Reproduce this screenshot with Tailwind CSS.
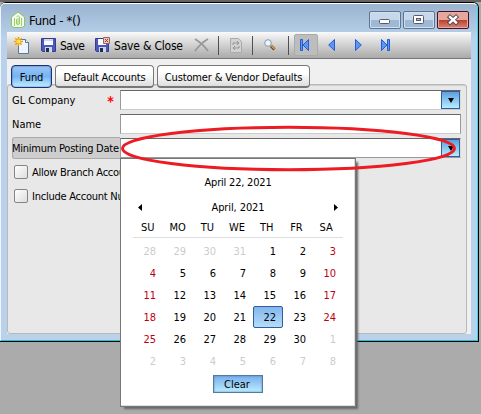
<!DOCTYPE html>
<html lang="en">
<head>
<meta charset="utf-8">
<title>Fund</title>
<script src="https://cdn.jsdelivr.net/npm/@tailwindcss/browser@4"></script>
</head>
<body class="relative h-[414px] w-[481px] overflow-hidden bg-[#ababab] font-['DejaVu_Sans_Condensed','DejaVu_Sans',sans-serif] text-[11px] leading-[14px] text-black [font-stretch:condensed]">
<div class="h-[2px] bg-[#656565]"></div>
<main class="flex h-[340px] w-[479px] flex-col rounded-t-[6px] border-t border-r border-b border-black bg-[#b9d1ea]">
 <div class="flex h-full flex-col rounded-t-[5px] border-t border-r border-b border-l border-t-white border-r-[#3bd5ec] border-b-[#18c9dc] border-l-[#eef5fb] bg-linear-to-b from-[#9ab4d1] from-0% via-[#b9d1ea] via-10% to-[#b9d1ea] pr-[6px] pl-[6px]">
  <header class="flex h-[28px] shrink-0 items-start">
   <svg class="mt-[7px] ml-[4px] shrink-0" width="14" height="18" viewBox="0 0 14 18"><path d="M.5 15V6L7 1l6.500 5v9L11 16.500H3z" fill="#f4faef" stroke="#8cc751"/><path d="M3.500 7v8M10.500 7v8M5.500 8v5q1.500 2 3 0V6Q7 3.500 5.500 6M7 7v6" fill="none" stroke="#9dcc70"/></svg>
   <h1 class="mt-[8px] ml-[4px] w-[56px] text-[13px] leading-[18px] tracking-[-0.35px] whitespace-nowrap">Fund - *()</h1>
   <div class="mt-[7px] mr-[2px] ml-auto flex gap-[2px]">
    <div class="h-[18px] w-[32px] rounded-[2px] border border-[#5d7590] bg-linear-to-b from-[#c7d8ea] from-48% to-[#9fb8d3] to-52% shadow-[inset_0_0_0_1px_#cfe0f1]"><svg width="30" height="16"><rect x="9.500" y="7.500" width="10" height="4" rx="1" fill="#fff" stroke="#555b68"/></svg></div>
    <div class="h-[18px] w-[32px] rounded-[2px] border border-[#5d7590] bg-linear-to-b from-[#c7d8ea] from-48% to-[#9fb8d3] to-52% shadow-[inset_0_0_0_1px_#cfe0f1]"><svg width="30" height="16"><rect x="9.500" y="3.500" width="10" height="8" rx="1" fill="#fff" stroke="#555b68"/><rect x="12.500" y="6.500" width="4" height="2" fill="#a9bdd5" stroke="#555b68"/></svg></div>
    <div class="h-[18px] w-[32px] rounded-[2px] border border-[#4b0f20] bg-linear-to-b from-[#e4a79c] from-48% via-[#bd3f2c] via-52% to-[#d78476] shadow-[inset_0_0_0_1px_#e6aaa1]"><svg width="30" height="16"><path d="M12 5 18 10.500M18 5 12 10.500" stroke="#534352" stroke-width="4.400" stroke-linecap="square"/><path d="M12 5 18 10.500M18 5 12 10.500" stroke="#fff" stroke-width="2.400" stroke-linecap="square"/></svg></div>
   </div>
  </header>
  <nav class="flex h-[27px] shrink-0 items-center border-b border-[#777] bg-linear-to-b from-[#fafafa] to-[#aaa] text-[12px]">
   <svg class="ml-[7px] shrink-0" width="16" height="17" viewBox="0 0 16 17"><path d="M4.500 2.500h7l3 3v11h-10z" fill="#edf4fb" stroke="#5c7698"/><path d="M11.500 2.500v3h3" fill="#fff" stroke="#5c7698"/><path d="M4.500 0v9M0 4.500h9M1.300 1.300l6.400 6.400M7.700 1.300 1.300 7.700" stroke="#f2a000" stroke-width="1.500"/><circle cx="4.500" cy="4.500" r="2" fill="#ffe25b"/></svg>
   <svg class="ml-[11px] shrink-0" width="15" height="15" viewBox="0 0 15 15"><path d="M.5.5h14v13h-13l-1-1z" fill="#4e57bc" stroke="#343d91"/><path d="M3 1h9v6H3z" fill="#f8fbff"/><path d="M3 2h9" stroke="#9db6d8"/><path d="M4 9h7v5H4z" fill="#ccd7e6"/><path d="M5 10h3v4H5z" fill="#222b52"/></svg>
   <span class="mt-[2px] ml-[4px] w-[26px] whitespace-nowrap tracking-[-0.5px]">Save</span>
   <svg class="ml-[9px] shrink-0" width="15" height="16" viewBox="0 0 15 16"><path d="M.5 1.500h13v13h-12l-1-1z" fill="#4e57bc" stroke="#343d91"/><path d="M3 2h8v6H3z" fill="#f8fbff"/><path d="M4 10h7v5H4z" fill="#ccd7e6"/><path d="M5 11h3v4H5z" fill="#222b52"/><path d="M8.500.5h6v6h-6z" fill="#e6c5bf" stroke="#936864"/><path d="m10 2 3 3m0-3-3 3" stroke="#a63c32"/></svg>
   <span class="mt-[2px] ml-[4px] w-[70px] whitespace-nowrap tracking-[-0.2px]">Save &amp; Close</span>
   <svg class="ml-[10px] shrink-0" width="16" height="14" viewBox="0 0 16 14"><path d="M1 1q8 5 13 12M14 1Q7 5 1 13" fill="none" stroke="#979797" stroke-width="1.700"/></svg>
   <i class="ml-[8px] h-[19px] w-px shrink-0 bg-[#505050]"></i>
   <svg class="ml-[11px] shrink-0" width="12" height="15" viewBox="0 0 12 15"><path d="M.5.5h8l3 3v11H.5z" fill="#d2d2d2" stroke="#aaa"/><path d="M3 7V5h5M7 3l2 2-2 2M9 8v2H4M5 8l-2 2 2 2" fill="none" stroke="#939393"/></svg>
   <i class="ml-[10px] h-[19px] w-px shrink-0 bg-[#505050]"></i>
   <svg class="ml-[11px] shrink-0" width="12" height="12" viewBox="0 0 12 12"><path d="m7 7 3.500 3.500" stroke="#5d4021" stroke-width="3"/><path d="m7.500 7 3 3" stroke="#ee9d34" stroke-width="1.500"/><circle cx="4" cy="4" r="3.300" fill="#e9f6ff" stroke="#8997a8"/></svg>
   <i class="ml-[12px] h-[19px] w-px shrink-0 bg-[#505050]"></i>
   <div class="ml-[5px] flex h-[22px] w-[24px] shrink-0 items-center justify-center rounded-[2px] border border-[#aaa] bg-[#bdbdbd]"><svg class="-ml-[3px]" width="10" height="12" viewBox="0 0 10 12"><path d="M.5.5h2v11h-2zM8.500.5v11L3 6z" fill="#5c95f5" stroke="#235ed0"/></svg></div>
   <svg class="ml-[10px] shrink-0" width="7" height="12" viewBox="0 0 7 12"><path d="M6.500.5v11L.7 6z" fill="#5c95f5" stroke="#235ed0"/></svg>
   <svg class="ml-[20px] shrink-0" width="7" height="12" viewBox="0 0 7 12"><path d="M.5.5v11L6.300 6z" fill="#5c95f5" stroke="#235ed0"/></svg>
   <svg class="ml-[19px] shrink-0" width="10" height="12" viewBox="0 0 10 12"><path d="M.5.5v11L6 6zM6.500.5h2v11h-2z" fill="#5c95f5" stroke="#235ed0"/></svg>
  </nav>
  <section class="flex h-[275px] shrink-0 flex-col bg-[#f0f0f0] pr-[4px]">
   <div class="z-10 mb-[-4px] ml-[4px] flex h-[29px] items-end gap-[3px] whitespace-nowrap tracking-[-0.15px]">
    <div class="h-[23px] w-[41px] rounded-[4px] border border-[#17327a] bg-linear-to-b from-[#9dc5f4] via-[#75b4f3] to-[#c5f1ff] pt-[5px] text-center shadow-[inset_0_0_2px_#2c61a8]">Fund</div>
    <div class="h-[23px] w-[99px] rounded-[4px] border border-b-2 border-[#777] bg-linear-to-b from-white from-35% to-[#dedede] pt-[5px] text-center">Default Accounts</div>
    <div class="h-[23px] w-[153px] rounded-[4px] border border-b-2 border-[#777] bg-linear-to-b from-white from-35% to-[#dedede] pt-[5px] text-center">Customer &amp; Vendor Defaults</div>
   </div>
   <div class="flex h-[250px] flex-col rounded-[3px] border border-[#b8b8b8] bg-[#e8e8e8] pt-[5px] pr-[5px] pl-[4px] shadow-[inset_0_1px_0_#d0d0d0] whitespace-nowrap">
    <div class="flex h-[24px]"><div class="flex w-[108px] justify-between pt-[4px] pr-[6px]"><span>GL Company</span><b class="text-[14px] leading-[15px] text-[#f00]">*</b></div><div class="flex h-[20px] w-[342px] justify-end border border-t-[#666] border-r-[#ddd] border-b-[#ccc] border-l-[#999] bg-white"><b class="flex w-[19px] items-center justify-center border border-[#315d9d] bg-linear-to-b from-[#5ba0dd] to-[#b8edff]"><svg width="6" height="5"><path d="M0 0h6L3 5z"/></svg></b></div></div>
    <div class="flex h-[24px]"><span class="w-[108px] pt-[4px]">Name</span><div class="h-[20px] w-[342px] border border-t-[#666] border-r-[#999] border-b-[#ccc] border-l-[#999] bg-white"></div></div>
    <div class="flex h-[24px]"><div class="-mt-px h-[22px] w-[108px] rounded-l-[3px] border border-r-0 border-[#aaa] bg-[#cecece] pt-[4px] tracking-[-0.25px]"><span class="-ml-px">Minimum Posting Date</span></div><div class="flex h-[20px] w-[342px] justify-end border border-t-[#666] border-r-[#ddd] border-b-[#999] border-l-[#999] bg-white"><b class="flex w-[19px] items-center justify-center border border-[#315d9d] bg-linear-to-b from-[#5ba0dd] to-[#b8edff]"><svg width="6" height="5"><path d="M0 0h6L3 5z"/></svg></b></div></div>
    <div class="flex h-[24px] items-start gap-[4px] pt-[3px] pl-[2px] tracking-[-0.25px]"><i class="h-[14px] w-[14px] rounded-[2px] border border-[#858585] bg-linear-to-br from-white to-[#ddd]"></i><span class="pt-px">Allow Branch Account</span></div>
    <div class="flex h-[24px] items-start gap-[4px] pt-[3px] pl-[2px] tracking-[-0.25px]"><i class="h-[14px] w-[14px] rounded-[2px] border border-[#858585] bg-linear-to-br from-white to-[#ddd]"></i><span class="pt-px">Include Account Number</span></div>
   </div>
  </section>
 </div>
</main>
<aside class="absolute top-[158px] left-[120px] flex h-[249px] w-[236px] flex-col border border-[#777] bg-white pl-[12px] shadow-[inset_-1px_-1px_0_#ddd,3px_3px_2px_-1px_#666]">
 <div class="mt-[17px] h-[14px] w-[210px] text-center tracking-[-0.2px]">April 22, 2021</div>
 <div class="mt-[11px] flex h-[14px] w-[210px] items-center justify-between pr-[5px] pl-[5px] tracking-[-0.1px]"><svg class="-mt-[2px]" width="4" height="7"><path d="M4 0v7L0 3.500z"/></svg><span>April, 2021</span><svg class="-mt-[2px]" width="4" height="7"><path d="M0 0v7l4-3.500z"/></svg></div>
 <div class="mt-[3px] grid h-[20px] w-[210px] grid-cols-7 border-b border-[#ddd] pt-[3px] pr-[2px] text-center"><span>SU</span><span>MO</span><span>TU</span><span>WE</span><span>TH</span><span>FR</span><span>SA</span></div>
 <div id="days" class="mt-[2px] grid w-[210px] grid-cols-7 text-right"></div>
 <div class="mt-[3px] ml-[80px] h-[18px] w-[50px] border border-[#55799f] bg-linear-to-b from-[#79b0ea] to-[#bcecff] pt-[2px] pr-[2px] text-center shadow-[inset_0_0_2px_#4e80ba]">Clear</div>
</aside>
<svg class="pointer-events-none absolute top-[124px] left-[118px]" width="340" height="50"><ellipse cx="170.500" cy="24.500" rx="166" ry="21.200" fill="none" stroke="#ed1c24" stroke-width="3"/></svg>
<script>
const days=[28,29,30,31,...Array.from({length:30},(_,i)=>i+1),1,2,3,4,5,6,7,8];
document.getElementById('days').innerHTML=days.map((d,i)=>{
 const other=i<4||i>33;
 const color=other?'text-[#ccc]':(i%7===0||i%7===6)?'text-[#c00010]':'text-black';
 const selected=!other&&d===22?'rounded-[2px] border border-[#315d9d] bg-linear-to-b from-[#82b7ed] to-[#b5dcfa] pt-[4px] pr-[6px]':'pt-[5px] pr-[7px]';
 return `<span class="h-[22px] ${color} ${selected}">${d}</span>`;
}).join('');
</script>
</body>
</html>
